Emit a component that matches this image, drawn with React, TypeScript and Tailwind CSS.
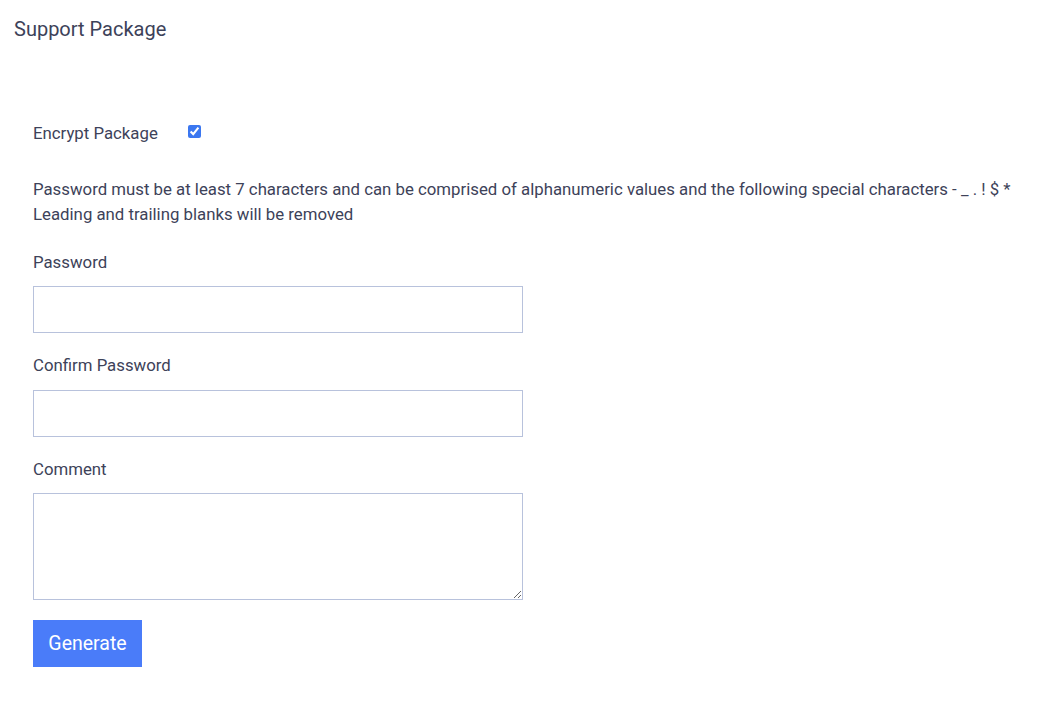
export default function App() {
  return (
    <div className="min-h-screen bg-white text-[#3d4259]" style={{ fontFamily: "Roboto, 'Liberation Sans', sans-serif" }}>
      <h1 className="pl-[14px] pt-[17px] text-[20px] leading-[24px] font-normal">Support Package</h1>

      <form className="pl-[33px] mt-[80px]" onSubmit={(e) => e.preventDefault()}>
        <div className="flex items-center h-[24px]">
          <label htmlFor="encrypt" className="text-[16.8px] leading-[24px] w-[155px]">Encrypt Package</label>
          <input id="encrypt" type="checkbox" defaultChecked className="w-[13px] h-[13px] m-0 -mt-[3px] accent-[#3b77f0]" />
        </div>

        <p className="mt-[32px] text-[16.8px] leading-[25px]">
          Password must be at least 7 characters and can be comprised of alphanumeric values and the following special characters - _ . ! $ *
          <br />
          Leading and trailing blanks will be removed
        </p>

        <label className="block mt-[23px] text-[16.8px] leading-[24px]">Password</label>
        <input type="password" className="block mt-[12px] w-[490px] h-[47px] border border-[#b8c2dc] px-3 outline-none" />

        <label className="block mt-[20px] text-[16.8px] leading-[24px]">Confirm Password</label>
        <input type="password" className="block mt-[13px] w-[490px] h-[47px] border border-[#b8c2dc] px-3 outline-none" />

        <label className="block mt-[20px] text-[16.8px] leading-[24px]">Comment</label>
        <textarea className="block mt-[12px] w-[490px] h-[107px] border border-[#b8c2dc] px-3 py-2 outline-none" />

        <button type="submit" className="block mt-[20px] w-[109px] h-[47px] bg-[#4a7cf9] text-white text-[19.5px]">Generate</button>
      </form>
    </div>
  );
}
